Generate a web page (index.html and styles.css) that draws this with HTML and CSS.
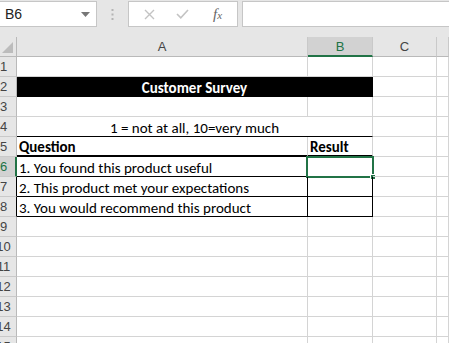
FILE: index.html
```html
<!DOCTYPE html>
<html lang="en">
<head>
    <meta charset="UTF-8">
    <title>Customer Survey - Excel</title>
    <link rel="stylesheet" href="styles.css">
</head>
<body>
    <div class="toolbar">
        <div class="namebox">
            <span>B6</span>
            <svg class="dropdown" width="9" height="5" viewBox="0 0 9 5"><path d="M0 0 H9 L4.5 5 Z" fill="#777"/></svg>
        </div>
        <div class="grip">
            <svg width="3" height="11" viewBox="0 0 3 11"><rect x="0.5" y="0" width="2" height="2" fill="#b4b4b4"/><rect x="0.5" y="4.5" width="2" height="2" fill="#b4b4b4"/><rect x="0.5" y="9" width="2" height="2" fill="#b4b4b4"/></svg>
        </div>
        <div class="fbuttons">
            <svg class="cancel" width="11" height="11" viewBox="0 0 11 11"><path d="M1 1 L10 10 M10 1 L1 10" stroke="#c3c3c3" stroke-width="1.4"/></svg>
            <svg class="enter" width="13" height="10" viewBox="0 0 13 10"><path d="M1 5 L4.8 8.8 L12 1" stroke="#c3c3c3" stroke-width="1.6" fill="none"/></svg>
            <span class="fx"><i>f</i><small>x</small></span>
        </div>
        <div class="finput"></div>
    </div>

    <div class="sheet">
        <!-- column headers -->
        <div class="corner"><svg width="11" height="11" viewBox="0 0 11 11"><path d="M11 0 V11 H0 Z" fill="#bcbcbc"/></svg></div>
        <div class="colhead">A</div>
        <div class="colhead active">B</div>
        <div class="colhead">C</div>
        <div class="colhead"></div>

        <!-- row 1 -->
        <div class="rowhead"><span>1</span></div>
        <div class="cell"></div><div class="cell"></div><div class="cell"></div><div class="cell"></div>

        <!-- row 2 -->
        <div class="rowhead"><span>2</span></div>
        <div class="cell merged title">Customer Survey</div>
        <div class="cell"></div><div class="cell"></div>

        <!-- row 3 -->
        <div class="rowhead"><span>3</span></div>
        <div class="cell"></div><div class="cell"></div><div class="cell"></div><div class="cell"></div>

        <!-- row 4 -->
        <div class="rowhead"><span>4</span></div>
        <div class="cell merged scale">1 = not at all, 10=very much</div>
        <div class="cell"></div><div class="cell"></div>

        <!-- row 5 -->
        <div class="rowhead"><span>5</span></div>
        <div class="cell head">Question</div>
        <div class="cell head">Result</div>
        <div class="cell"></div><div class="cell"></div>

        <!-- rows 6-8 -->
        <div class="rowhead selected"><span>6</span></div>
        <div class="cell boxed first">1. You found this product useful</div>
        <div class="cell boxed result"><div class="selection"><div class="handle"></div></div></div>
        <div class="cell"></div><div class="cell"></div>

        <div class="rowhead edge"><span>7</span></div>
        <div class="cell boxed first">2. This product met your expectations</div>
        <div class="cell boxed result"></div>
        <div class="cell"></div><div class="cell"></div>

        <div class="rowhead edge"><span>8</span></div>
        <div class="cell boxed first">3. You would recommend this product</div>
        <div class="cell boxed result"></div>
        <div class="cell"></div><div class="cell"></div>

        <div class="rowhead"><span>9</span></div>
        <div class="cell"></div><div class="cell"></div><div class="cell"></div><div class="cell"></div>
        <div class="rowhead"><span>10</span></div>
        <div class="cell"></div><div class="cell"></div><div class="cell"></div><div class="cell"></div>
        <div class="rowhead"><span>11</span></div>
        <div class="cell"></div><div class="cell"></div><div class="cell"></div><div class="cell"></div>
        <div class="rowhead"><span>12</span></div>
        <div class="cell"></div><div class="cell"></div><div class="cell"></div><div class="cell"></div>
        <div class="rowhead"><span>13</span></div>
        <div class="cell"></div><div class="cell"></div><div class="cell"></div><div class="cell"></div>
        <div class="rowhead"><span>14</span></div>
        <div class="cell"></div><div class="cell"></div><div class="cell"></div><div class="cell"></div>
        <div class="rowhead"><span>15</span></div>
        <div class="cell"></div><div class="cell"></div><div class="cell"></div><div class="cell"></div>
    </div>
</body>
</html>
```

FILE: styles.css
```css
* {
    margin: 0;
    padding: 0;
    box-sizing: border-box;
}

body {
    font-family: Carlito, "Liberation Sans", Arial, sans-serif;
    background: #ffffff;
    color: #000;
    overflow: hidden;
    width: 449px;
    height: 343px;
}

/* formula bar */
.toolbar {
    display: flex;
    align-items: flex-start;
    height: 37px;
    padding-top: 1px;
    background: #e6e6e6;
}

.namebox {
    display: flex;
    align-items: center;
    justify-content: space-between;
    width: 98px;
    height: 26px;
    margin-left: -1px;
    padding: 0 6px 0 5px;
    background: #fff;
    border: 1px solid #c6c6c6;
    font-family: "Liberation Sans", Arial, sans-serif;
    font-size: 14px;
    color: #222;
}

.grip {
    width: 31px;
    height: 26px;
    display: flex;
    align-items: center;
    justify-content: center;
}

.fbuttons {
    display: flex;
    align-items: center;
    width: 110px;
    height: 26px;
    background: #fff;
    border: 1px solid #c6c6c6;
    padding-left: 15px;
}

.fbuttons .enter {
    margin-left: 21px;
}

.fx {
    margin-left: 24px;
    font-family: "Liberation Serif", "Times New Roman", serif;
    color: #666;
    font-size: 15px;
    font-style: italic;
}

.fx small {
    font-size: 11px;
    font-style: italic;
}

.finput {
    flex: 1;
    height: 26px;
    margin-left: 4px;
    margin-right: -2px;
    background: #fff;
    border: 1px solid #c6c6c6;
}

/* grid */
.sheet {
    display: grid;
    grid-template-columns: 17px 291px 65px 64px 1fr;
    grid-auto-rows: 20px;
}

.corner,
.colhead,
.rowhead {
    background: #e6e6e6;
    font-family: "Liberation Sans", Arial, sans-serif;
    font-size: 13px;
    color: #444;
}

.corner {
    border-right: 1px solid #b9b9b9;
    border-bottom: 1px solid #b9b9b9;
    display: flex;
    align-items: flex-end;
    justify-content: flex-end;
    padding: 0 3px 3px 0;
}

.colhead {
    display: flex;
    align-items: center;
    justify-content: center;
    border-right: 1px solid #c9c9c9;
    border-bottom: 1px solid #b9b9b9;
}

.colhead.active {
    background: #d2d2d2;
    color: #217346;
    border-bottom: 2px solid #217346;
}

.rowhead {
    display: flex;
    align-items: center;
    overflow: hidden;
    border-right: 1px solid #b9b9b9;
    border-bottom: 1px solid #c9c9c9;
}

.rowhead span {
    flex: none;
    width: 25px;
    margin-left: -9px;
    text-align: center;
}

.rowhead.selected {
    background: #d2d2d2;
    color: #217346;
    border-right: 2px solid #217346;
}

.rowhead.edge {
    border-right-color: #000;
}

.cell {
    position: relative;
    display: flex;
    align-items: flex-end;
    padding: 0 2px;
    border-right: 1px solid #d4d4d4;
    border-bottom: 1px solid #d4d4d4;
    font-size: 15px;
    line-height: 16px;
    white-space: nowrap;
}

.merged {
    grid-column: span 2;
    justify-content: center;
}

.title {
    background: #000;
    color: #fff;
    font-weight: bold;
    border-color: #000;
}

.scale {
    border-bottom-color: #000;
}

.head {
    font-weight: bold;
    border-bottom: 2px solid #000;
}

.boxed {
    border-right-color: #000;
    border-bottom-color: #000;
}

/* active cell */
.selection {
    position: absolute;
    top: -1px;
    left: -2px;
    right: -2px;
    bottom: -2px;
    border: 2px solid #217346;
}

.handle {
    position: absolute;
    right: -4px;
    bottom: -4px;
    width: 6px;
    height: 6px;
    background: #217346;
    border: 1px solid #fff;
}
```
